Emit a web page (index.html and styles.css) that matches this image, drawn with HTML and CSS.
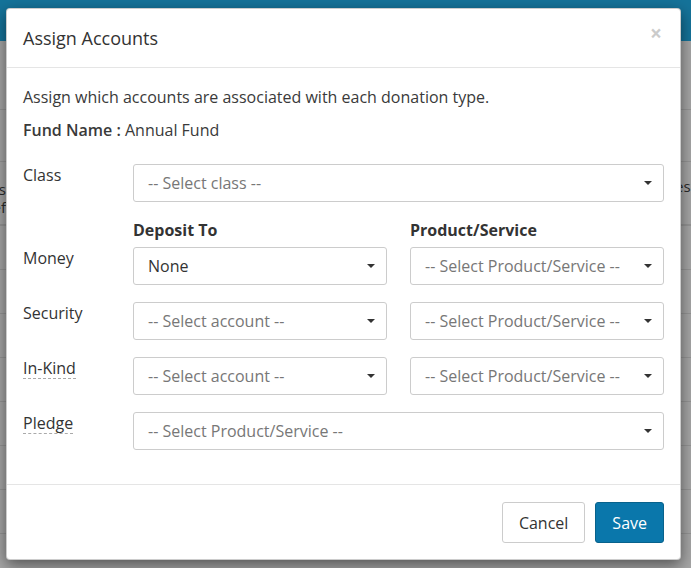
FILE: index.html
```html
<!DOCTYPE html>
<html lang="en">
<head>
    <meta charset="UTF-8">
    <meta name="viewport" content="width=device-width, initial-scale=1.0">
    <title>Assign Accounts</title>
    <link rel="stylesheet" href="styles.css">
</head>

<body>
    <!-- page behind the backdrop -->
    <div class="page">
        <div class="topbar"></div>
        <div class="toolbar"></div>
        <div class="list">
            <div class="list-row"></div>
            <div class="list-row tall">
                <div class="cell-left">
                    <div>Gifts</div>
                    <div>Ref</div>
                </div>
                <div class="cell-right">Types</div>
            </div>
            <div class="list-row"></div>
            <div class="list-row"></div>
            <div class="list-row"></div>
            <div class="list-row"></div>
            <div class="list-row"></div>
            <div class="list-row"></div>
            <div class="list-row"></div>
        </div>
    </div>

    <div class="modal">
        <div class="modal-header">
            <h4 class="modal-title">Assign Accounts</h4>
            <span class="close">&times;</span>
        </div>

        <div class="modal-body">
            <p class="intro">Assign which accounts are associated with each donation type.</p>
            <p class="fund"><b>Fund Name :</b> Annual Fund</p>

            <div class="form-row">
                <label class="field-label">Class</label>
                <div class="select wide placeholder">
                    <span>-- Select class --</span><i class="caret"></i>
                </div>
            </div>

            <div class="form-row heads">
                <span></span>
                <span class="col-head">Deposit To</span>
                <span class="col-head">Product/Service</span>
            </div>

            <div class="form-row">
                <label class="field-label">Money</label>
                <div class="select">
                    <span>None</span><i class="caret"></i>
                </div>
                <div class="select placeholder">
                    <span>-- Select Product/Service --</span><i class="caret"></i>
                </div>
            </div>

            <div class="form-row">
                <label class="field-label">Security</label>
                <div class="select placeholder">
                    <span>-- Select account --</span><i class="caret"></i>
                </div>
                <div class="select placeholder">
                    <span>-- Select Product/Service --</span><i class="caret"></i>
                </div>
            </div>

            <div class="form-row">
                <label class="field-label"><span class="hint">In-Kind</span></label>
                <div class="select placeholder">
                    <span>-- Select account --</span><i class="caret"></i>
                </div>
                <div class="select placeholder">
                    <span>-- Select Product/Service --</span><i class="caret"></i>
                </div>
            </div>

            <div class="form-row">
                <label class="field-label"><span class="hint">Pledge</span></label>
                <div class="select wide placeholder">
                    <span>-- Select Product/Service --</span><i class="caret"></i>
                </div>
            </div>
        </div>

        <div class="modal-footer">
            <button class="btn btn-default">Cancel</button>
            <button class="btn btn-primary">Save</button>
        </div>
    </div>
</body>

</html>
```

FILE: styles.css
```css
* {
    margin: 0;
    padding: 0;
    box-sizing: border-box;
}

html {
    overflow: hidden;
}

body {
    width: 691px;
    height: 568px;
    overflow: hidden;
    position: relative;
    background-color: #a6a6a6;
    font-family: 'Open Sans', 'Noto Sans', sans-serif;
    color: #333;
}

/* Page behind backdrop */
.topbar {
    height: 41px;
    background-color: #15739a;
}

.toolbar {
    height: 69px;
    border-bottom: 1px solid #959595;
}

.list-row {
    height: 44px;
    border-bottom: 1px solid #959595;
    display: flex;
    justify-content: space-between;
    align-items: flex-start;
    font-size: 15px;
    line-height: 18px;
    color: #2b2b2b;
}

.list-row:first-child {
    height: 52px;
}

.list-row.tall {
    height: 64px;
    border-bottom-width: 2px;
}

.cell-left {
    width: 50px;
    margin-left: -44px;
    text-align: right;
    padding-top: 18px;
}

.cell-right {
    width: 40px;
    margin-right: 1px;
    padding-top: 15px;
}

/* Modal */
.modal {
    position: absolute;
    top: 8px;
    left: 6px;
    width: 675px;
    background-color: #fff;
    border: 1px solid rgba(0, 0, 0, 0.2);
    border-radius: 4px;
    box-shadow: 0 5px 15px rgba(0, 0, 0, 0.5);
}

.modal-header {
    display: flex;
    justify-content: space-between;
    align-items: flex-start;
    padding: 15px 16px;
    border-bottom: 1px solid #e5e5e5;
}

.modal-title {
    font-size: 18px;
    font-weight: normal;
    line-height: 28px;
    color: #333;
}

.close {
    font-size: 21px;
    font-weight: bold;
    line-height: 20px;
    color: #000;
    opacity: 0.2;
    margin-top: -1px;
    margin-right: 2px;
}

.modal-body {
    padding: 18px 16px 34px 16px;
    font-size: 16px;
    line-height: 22px;
    color: #3a3a3a;
}

.intro {
    margin-bottom: 11px;
}

.fund {
    margin-bottom: 23px;
}

.fund b {
    font-weight: 600;
}

.form-row {
    display: grid;
    grid-template-columns: 87px 254px 254px;
    column-gap: 23px;
    margin-bottom: 17px;
}

.form-row:last-child {
    margin-bottom: 0;
}

.form-row.heads {
    margin-top: 18px;
    margin-bottom: 7px;
    line-height: 20px;
}

.col-head {
    font-size: 16px;
    font-weight: bold;
    color: #333;
}

.field-label {
    font-size: 16px;
    line-height: 20px;
    padding-top: 1px;
    color: #333;
}

.hint {
    display: inline-block;
    border-bottom: 1px dashed #aaa;
}

.select {
    height: 38px;
    border: 1px solid #ccc;
    border-radius: 3px;
    padding: 0 11px 0 14px;
    display: flex;
    align-items: center;
    justify-content: space-between;
    font-size: 16px;
    color: #333;
    background-color: #fff;
}

.select.wide {
    grid-column: 2 / 4;
}

.select.placeholder {
    color: #777;
}

.caret {
    width: 0;
    height: 0;
    border-left: 4px solid transparent;
    border-right: 4px solid transparent;
    border-top: 4px solid #333;
}

/* Footer */
.modal-footer {
    display: flex;
    justify-content: flex-end;
    gap: 10px;
    padding: 17px 16px 16px 16px;
    border-top: 1px solid #e5e5e5;
}

.btn {
    height: 41px;
    padding: 0 16px;
    font-family: 'Open Sans', 'Noto Sans', sans-serif;
    font-size: 16px;
    border-radius: 3px;
    border: 1px solid #ccc;
    cursor: pointer;
}

.btn-default {
    background-color: #fff;
    color: #333;
}

.btn-primary {
    background-color: #0a77ab;
    border-color: #08628c;
    color: #fff;
}
```
